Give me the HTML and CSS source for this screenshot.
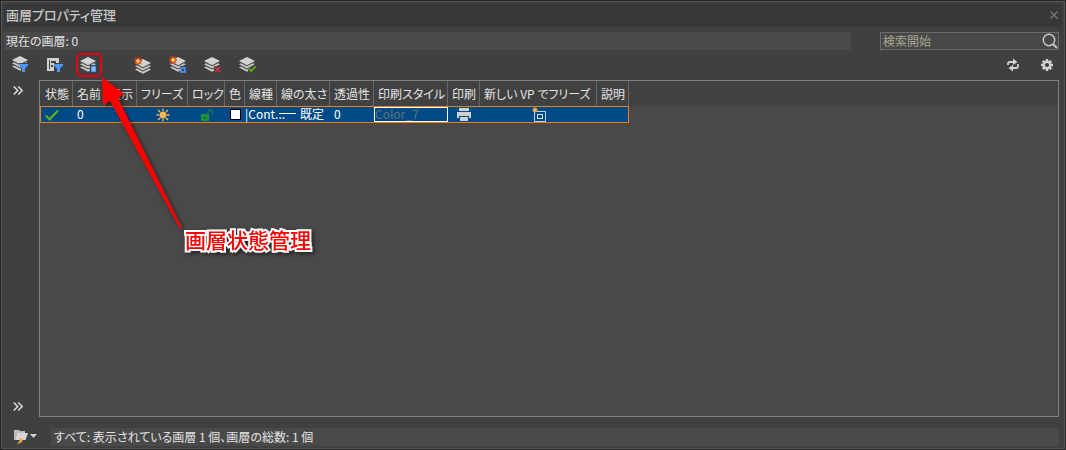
FILE: index.html
```html
<!DOCTYPE html>
<html lang="ja">
<head>
    <meta charset="UTF-8">
    <meta name="viewport" content="width=device-width, initial-scale=1.0">
    <title>画層プロパティ管理</title>
    <link rel="stylesheet" href="styles.css">
</head>
<body>
    <!-- shared icon parts -->
    <svg class="defs" width="0" height="0" aria-hidden="true">
        <symbol id="stack" viewBox="0 0 16 15">
            <path d="M0 10.500 2 9.500 8 12.500 14 9.500 16 10.500 8 14.700Z" fill="#c8c8c8"/>
            <path d="M0 7.300 2 6.300 8 9.300 14 6.300 16 7.300 8 11.500Z" fill="#c8c8c8"/>
            <path d="M8 0 16 4 8 8.300 0 4Z" fill="#d2d2d2"/>
        </symbol>
        <symbol id="funnel" viewBox="0 0 9 8">
            <path d="M0 0H9V1.500L6 4.500V8H3V4.500L0 1.500Z" fill="#4b96fa"/>
        </symbol>
        <symbol id="spark" viewBox="0 0 8 8">
            <path d="M1 1 7 7M7 1 1 7M4 0V8M0 4H8" stroke="#e8381e" stroke-width="1.500"/>
            <path d="M4 2V6M2 4H6" stroke="#ffe04a" stroke-width="1.600"/>
        </symbol>
        <symbol id="chevrons" viewBox="0 0 10 9">
            <path d="M.7.5 4.7 4.5.7 8.5M5.2.5 9.2 4.5 5.2 8.5" fill="none" stroke="#dcdcdc" stroke-width="1.5"/>
        </symbol>
    </svg>

    <div class="palette">
        <header class="titlebar">
            <h1>画層プロパティ管理</h1>
            <button class="close" aria-label="閉じる">
                <svg width="8" height="8" viewBox="0 0 8 8"><path d="M.5.5 7.5 7.5M7.5.5.5 7.5" stroke="#777" stroke-width="1.4"/></svg>
            </button>
        </header>

        <div class="top-row">
            <div class="current">現在の画層: 0</div>
            <div class="search">
                <input type="text" placeholder="検索開始" aria-label="検索開始">
                <svg width="16" height="16" viewBox="0 0 16 16"><circle cx="7" cy="7" r="5.700" fill="none" stroke="#ccc" stroke-width="1.4"/><path d="M11 11 15 15" stroke="#ccc" stroke-width="1.8"/></svg>
            </div>
        </div>

        <div class="toolbar">
            <div class="tools">
                <button aria-label="プロパティ フィルタを新規作成">
                    <svg width="18" height="18" viewBox="0 0 18 18"><use href="#stack" x="0" y="0" width="16" height="15"/><path d="M7 7H18V12L14 18H9V12Z" fill="#404040"/><use href="#funnel" x="7" y="8" width="9" height="8"/></svg>
                </button>
                <button aria-label="グループ フィルタを新規作成">
                    <svg width="18" height="18" viewBox="0 0 18 18"><path d="M1 2H13V7H8V15H1Z" fill="#d0d0d0"/><path d="M3 4H4V13H3ZM5 9H7V11H5ZM5 5H10V7H5Z" fill="#404040"/><use href="#funnel" x="8" y="8" width="9" height="8"/></svg>
                </button>
                <button class="marked" aria-label="画層状態管理">
                    <svg width="18" height="18" viewBox="0 0 18 18"><use href="#stack" x="0" y="1" width="16" height="15"/><path d="M10 9H17V18H10Z" fill="#404040"/><path d="M11 10H16V16H11Z" fill="#4b96fa"/><path d="M12 12H15M12 14H15" stroke="#d8e8ff"/></svg>
                </button>
            </div>
            <div class="tools edit">
                <button aria-label="新規作成">
                    <svg width="18" height="18" viewBox="0 0 18 18"><use href="#stack" x="1" y="3" width="16" height="15"/><use href="#spark" x="0" y="1" width="8" height="8"/></svg>
                </button>
                <button aria-label="すべてのビューポートでフリーズされた新しい画層">
                    <svg width="18" height="18" viewBox="0 0 18 18"><use href="#stack" x="1" y="1" width="16" height="15"/><path d="M11 10H18V18H11Z" fill="#404040"/><use href="#spark" x="0" y="0" width="8" height="8"/><rect x="12" y="12" width="4" height="4" fill="none" stroke="#4b96fa" stroke-width="1.700"/></svg>
                </button>
                <button aria-label="画層を削除">
                    <svg width="18" height="18" viewBox="0 0 18 18"><use href="#stack" x="0" y="1" width="16" height="15"/><path d="M10 10H18V18H10Z" fill="#404040"/><path d="M11 11 16 16M16 11 11 16" stroke="#d2333b" stroke-width="1.700"/></svg>
                </button>
                <button aria-label="現在に設定">
                    <svg width="18" height="18" viewBox="0 0 18 18"><use href="#stack" x="0" y="1" width="16" height="15"/><path d="M9 12 11 12 16 8 18 9V18H9Z" fill="#404040"/><path d="M9.500 12.500 12 15 16.500 10.500" fill="none" stroke="#62b515" stroke-width="1.700"/></svg>
                </button>
            </div>
            <div class="tools right">
                <button aria-label="更新">
                    <svg width="14" height="14" viewBox="0 0 14 14"><path d="M2 7V5.500Q2 4 4 4H8M12 6V8Q12 10 10 10H6" fill="none" stroke="#d2d2d2" stroke-width="1.800"/><path d="M7 .5 11.500 4 7 7ZM7 7 2.500 10 7 13.500Z" fill="#d2d2d2"/></svg>
                </button>
                <button aria-label="設定">
                    <svg width="14" height="14" viewBox="0 0 14 14"><path d="M7 1V13M1 7H13M2.800 2.800 11.200 11.200M11.200 2.800 2.800 11.200" stroke="#d2d2d2" stroke-width="2.400"/><circle cx="7" cy="7" r="3.300" fill="#404040" stroke="#d2d2d2" stroke-width="2.400"/></svg>
                </button>
            </div>
        </div>

        <main class="content">
            <div class="side">
                <button aria-label="フィルタを展開"><svg width="10" height="9"><use href="#chevrons"/></svg></button>
                <button aria-label="フィルタを表示"><svg width="10" height="9"><use href="#chevrons"/></svg></button>
            </div>
            <div class="list">
                <table>
                    <colgroup>
                        <col class="w-state"><col class="w-short"><col class="w-short">
                        <col class="w-freeze"><col class="w-lock"><col class="w-color">
                        <col class="w-short"><col class="w-weight"><col class="w-trans">
                        <col class="w-style"><col class="w-short"><col class="w-vp"><col class="w-short">
                    </colgroup>
                    <thead>
                        <tr>
                            <th>状態</th>
                            <th>名前</th>
                            <th>表示</th>
                            <th>フリーズ</th>
                            <th>ロック</th>
                            <th>色</th>
                            <th>線種</th>
                            <th>線の太さ</th>
                            <th>透過性</th>
                            <th>印刷スタイル</th>
                            <th>印刷</th>
                            <th>新しい VP でフリーズ</th>
                            <th>説明</th>
                        </tr>
                    </thead>
                    <tbody>
                        <tr>
                            <td><svg width="14" height="12" viewBox="0 0 14 12"><path d="M1 6.500 4.500 10.500 13 1.500" fill="none" stroke="#68b60c" stroke-width="2"/></svg></td>
                            <td>0</td>
                            <td></td>
                            <td class="mid">
                                <svg width="14" height="14" viewBox="0 0 14 14"><path d="M7 .5V3M7 11V13.500M.5 7H3M11 7H13.500M2 2 4 4M10 10 12 12M12 2 10 4M4 10 2 12" stroke="#ffb64d" stroke-width="1.300"/><circle cx="7" cy="7" r="3.500" fill="#ffb64d"/></svg>
                            </td>
                            <td class="mid">
                                <svg width="14" height="14" viewBox="0 0 14 14"><path d="M1 6H9V13H1Z" fill="#1f9238"/><path d="M8 7V4Q8 2 10 2 12.500 2 12.500 4V6" fill="none" stroke="#1b7754" stroke-width="1.500"/><path d="M4 9H6V11H4Z" fill="#115b4c"/></svg>
                            </td>
                            <td class="mid"><span class="swatch"></span></td>
                            <td class="tight">|Cont...</td>
                            <td class="tight"><span class="weight">既定</span></td>
                            <td>0</td>
                            <td class="style-cell">Color_7</td>
                            <td class="mid">
                                <svg width="14" height="13" viewBox="0 0 14 13"><path d="M2 0H12V3H2ZM0 4H14V10H12V8H2V10H0ZM3 9H11V13H3Z" fill="#cdd1d4"/></svg>
                            </td>
                            <td class="mid">
                                <svg width="14" height="15" viewBox="0 0 14 15"><path d="M2.500 4V14.500H13.500V4.500H5" fill="none" stroke="#c4d2df"/><rect x="5.500" y="7.500" width="5" height="4" fill="none" stroke="#dce4ec"/><path d="M3 0V6M0 3H6M1 1 5 5M5 1 1 5" stroke="#e39a38"/><circle cx="3" cy="3" r="1.700" fill="#ffbd55"/></svg>
                            </td>
                            <td></td>
                        </tr>
                    </tbody>
                </table>
            </div>
        </main>

        <footer class="status">
            <button class="folder" aria-label="フィルタ">
                <svg width="24" height="16" viewBox="0 0 24 16"><path d="M1 1H6L7 2H12V4H4L2 11H1Z" fill="#bcbcbc"/><path d="M4 4H15L12.500 11H2Z" fill="#d6d6d6"/><path d="M6 9.500H10L9 13 4 15.500 6.500 12Z" fill="#f3ab42"/><path d="M17 5H24L20.500 9Z" fill="#d0d0d0"/></svg>
            </button>
            <p>すべて: 表示されている画層 1 個、画層の総数: 1 個</p>
        </footer>
    </div>

    <!-- callout pointing at the layer states button -->
    <svg class="arrow" width="94" height="160" viewBox="0 0 94 160" aria-hidden="true">
        <path d="M4 4 26 21 20 25 84 155 82 156 12 28 5 32Z" fill="#f00"/>
    </svg>
    <div class="callout">画層状態管理</div>
</body>
</html>
```
FILE: styles.css
```css
* {
    box-sizing: border-box;
}
body {
    margin: 0;
    background-color: #252525;
    color: #e4e4e4;
    font-family: "Noto Sans CJK JP", sans-serif;
    font-size: 12px;
    line-height: 18px;
    font-feature-settings: "palt";
}
svg {
    display: block;
}
.defs {
    position: absolute;
}
button {
    display: flex;
    align-items: center;
    justify-content: center;
    padding: 0;
    border: none;
    background: none;
    cursor: pointer;
}
.palette {
    display: flex;
    flex-direction: column;
    height: 100vh;
    border: 1px solid #252525;
    border-bottom-width: 2px;
    outline: 1px solid #555;
    outline-offset: -2px;
    padding: 3px 6px 2px 3px;
    background-color: #404040;
}
.titlebar {
    display: flex;
    align-items: center;
    justify-content: space-between;
    height: 23px;
    margin-right: -3px;
    padding: 0 4px 2px 2px;
    background-color: #383838;
}
.titlebar h1 {
    margin: 0;
    font-size: 13px;
    font-weight: 500;
    color: #c8c8c8;
}
.top-row {
    display: flex;
    gap: 29px;
    margin-top: 5px;
}
.current {
    flex: 1;
    padding-left: 2px;
    background-color: #494949;
}
.search {
    display: flex;
    align-items: center;
    width: 179px;
    height: 18px;
    border: 1px solid #6b6b6b;
    background-color: #484848;
}
.search input {
    flex: 1;
    min-width: 0;
    height: 16px;
    padding: 0 2px;
    border: none;
    outline: none;
    background: none;
    color: #ddd;
    font: inherit;
}
.search input::placeholder {
    color: #aaa793;
}
.toolbar {
    display: flex;
    align-items: center;
    height: 30px;
    padding-left: 4px;
}
.tools {
    display: flex;
    gap: 8px;
}
.tools button {
    width: 26px;
    height: 24px;
}
.tools.edit {
    gap: 9px;
    margin-left: 28px;
}
.tools.right {
    margin-right: -1px;
    margin-left: auto;
}
.tools .marked {
    border: 2px solid #e60012;
    border-radius: 5px;
}
.content {
    display: flex;
    flex: 1;
}
.side {
    display: flex;
    flex-direction: column;
    justify-content: space-between;
    width: 35px;
    padding: 6px 8px 6px 9px;
}
.side button {
    width: 10px;
    height: 9px;
}
.list {
    flex: 1;
    border: 1px solid #7d838e;
    background: linear-gradient(#414141 25px, #494949 25px);
}
table {
    table-layout: fixed;
    width: 589px;
    border-collapse: separate;
    border-spacing: 0;
}
.w-state { width: 33px; }
.w-short { width: 32px; }
.w-freeze { width: 51px; }
.w-lock { width: 37px; }
.w-color { width: 20px; }
.w-weight { width: 53px; }
.w-trans { width: 44px; }
.w-style { width: 74px; }
.w-vp { width: 117px; }
th {
    height: 25px;
    padding: 0 0 0 4px;
    border-right: 1px solid #686868;
    font-weight: 400;
    text-align: left;
    white-space: nowrap;
    overflow: hidden;
}
th:first-child {
    padding-left: 5px;
}
td {
    height: 17px;
    padding: 0 0 2px 4px;
    border-top: 1px solid #f08010;
    border-bottom: 1px solid #f08010;
    background-color: #004b87;
    color: #fff;
    line-height: 13px;
    white-space: nowrap;
}
td:first-child {
    padding-bottom: 0;
    border-left: 1px solid #f08010;
}
td:last-child {
    border-right: 1px solid #f08010;
}
.mid {
    padding: 0;
}
.mid svg,
.swatch {
    margin: 0 auto;
}
.swatch {
    display: block;
    width: 11px;
    height: 11px;
    border: 1px solid #000;
    background-color: #fff;
}
.tight {
    padding-left: 0;
}
.weight {
    display: flex;
    align-items: center;
    gap: 4px;
    padding-left: 2px;
}
.weight::before {
    content: "";
    width: 17px;
    height: 1px;
    background-color: #fff;
}
.style-cell {
    padding-left: 1px;
    color: #667078;
    box-shadow: inset 0 0 0 1px #fff;
}
.status {
    display: flex;
    align-items: center;
    gap: 14px;
    margin-top: 11px;
    padding-left: 9px;
}
.status p {
    flex: 1;
    margin: 0;
    padding-left: 3px;
    background-color: #494949;
}
.arrow {
    position: absolute;
    left: 98px;
    top: 73px;
    overflow: visible;
    filter: drop-shadow(2px 2px 2px rgba(0, 0, 0, 0.5));
}
.callout {
    position: absolute;
    left: 185px;
    top: 224px;
    color: #f00;
    font-size: 21px;
    font-weight: 500;
    line-height: 30px;
    font-feature-settings: normal;
    -webkit-text-stroke: 4px #fff;
    paint-order: stroke fill;
    filter: drop-shadow(2px 2px 2px rgba(0, 0, 0, 0.5));
}
```
